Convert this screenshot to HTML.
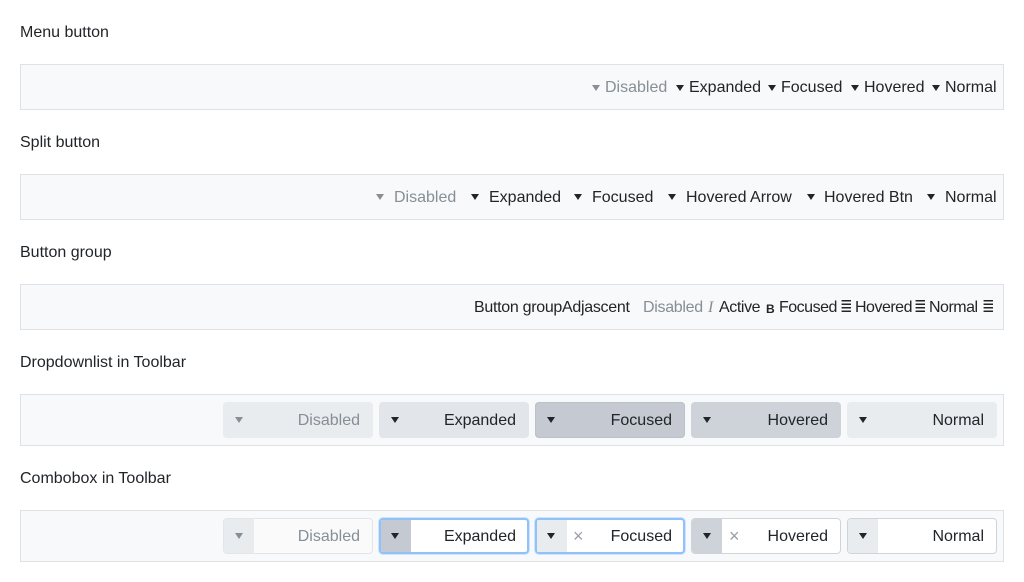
<!DOCTYPE html>
<html><head><style>
body{margin:0;width:1024px;height:582px;background:#fff;font-family:"Liberation Sans",sans-serif;font-size:16px;color:#212529;position:relative;overflow:hidden}
.a{position:absolute;white-space:nowrap;line-height:20px}
.lbl{left:20px}
.tb{position:absolute;left:20px;width:982px;background:#f8f9fa;border:1px solid #dee2e6}
.g{color:#868e96}
.t{position:absolute;width:0;height:0;border-left:4px solid transparent;border-right:4px solid transparent;border-top:6px solid #212529}
.tg{border-top-color:#868e96}
.dd{position:absolute;top:402px;width:150px;height:36px;border-radius:4px;background:#e9ecef;box-sizing:border-box}
.dd .t{left:12px;top:15px}
.dd span{position:absolute;right:13px;top:9px;line-height:20px}
.cb{position:absolute;top:518px;width:150px;height:36px;border-radius:4px;background:#fff;border:1px solid #ced4da;box-sizing:border-box;overflow:hidden}
.cb .ar{position:absolute;left:0;top:0;bottom:0;width:30px;background:#e9ecef}
.cb .t{left:11px;top:14px}
.cb span{position:absolute;right:12px;top:8px;line-height:20px}
.cb .x{position:absolute;left:37px;top:7px;color:#9aa0a6;font-size:18px}
.foc{border:2px solid #90c2f9;box-shadow:0 0 0 1px #cfe4fc}
.foc .t{left:10px;top:13px}.foc span{right:11px;top:7px}.foc .x{left:36px;top:6px}
</style></head><body>
<div class="a lbl" style="top:23px">Menu button</div>
<div class="tb" style="top:64px;height:44px"></div>
<div class="t tg" style="left:592px;top:85px"></div><div class="a g" style="left:605px;top:78px">Disabled</div>
<div class="t" style="left:676px;top:85px"></div><div class="a" style="left:689px;top:78px">Expanded</div>
<div class="t" style="left:768px;top:85px"></div><div class="a" style="left:781px;top:78px">Focused</div>
<div class="t" style="left:851px;top:85px"></div><div class="a" style="left:864px;top:78px">Hovered</div>
<div class="t" style="left:932px;top:85px"></div><div class="a" style="left:945px;top:78px">Normal</div>

<div class="a lbl" style="top:133px">Split button</div>
<div class="tb" style="top:174px;height:44px"></div>
<div class="t tg" style="left:376px;top:194px"></div><div class="a g" style="left:394px;top:188px">Disabled</div>
<div class="t" style="left:471px;top:194px"></div><div class="a" style="left:489px;top:188px">Expanded</div>
<div class="t" style="left:574px;top:194px"></div><div class="a" style="left:592px;top:188px">Focused</div>
<div class="t" style="left:668px;top:194px"></div><div class="a" style="left:686px;top:188px">Hovered Arrow</div>
<div class="t" style="left:807px;top:194px"></div><div class="a" style="left:824px;top:188px">Hovered Btn</div>
<div class="t" style="left:927px;top:194px"></div><div class="a" style="left:945px;top:188px">Normal</div>

<div class="a lbl" style="top:243px">Button group</div>
<div class="tb" style="top:284px;height:44px"></div>
<div class="a" style="left:474px;top:298px;letter-spacing:-0.3px">Button groupAdjascent</div>
<div class="a g" style="left:643px;top:298px;letter-spacing:-0.3px">Disabled</div>
<div class="a g" style="left:708px;top:298px;font-family:'Liberation Serif',serif;font-style:italic">I</div>
<div class="a" style="left:719px;top:298px;letter-spacing:-0.4px">Active</div>
<div class="a" style="left:766px;top:299px;font-weight:bold;font-size:12px">B</div>
<div class="a" style="left:779px;top:298px;letter-spacing:-0.5px">Focused</div>
<div class="a" style="left:840px;top:297px;font-size:15px;transform:scaleY(1.3)">≣</div>
<div class="a" style="left:855px;top:298px;letter-spacing:-0.5px">Hovered</div>
<div class="a" style="left:914px;top:297px;font-size:15px;transform:scaleY(1.3)">≣</div>
<div class="a" style="left:929px;top:298px;letter-spacing:-0.5px">Normal</div>
<div class="a" style="left:982px;top:297px;font-size:15px;transform:scaleY(1.3)">≣</div>

<div class="a lbl" style="top:353px">Dropdownlist in Toolbar</div>
<div class="tb" style="top:394px;height:50px"></div>
<div class="dd" style="left:223px"><div class="t tg"></div><span class="g">Disabled</span></div>
<div class="dd" style="left:379px;background:#e2e5e9"><div class="t"></div><span>Expanded</span></div>
<div class="dd" style="left:535px;background:#c5cad2;box-shadow:inset 0 0 0 1px #bcc2ca"><div class="t"></div><span>Focused</span></div>
<div class="dd" style="left:691px;background:#ced3da"><div class="t"></div><span>Hovered</span></div>
<div class="dd" style="left:847px"><div class="t"></div><span>Normal</span></div>

<div class="a lbl" style="top:469px">Combobox in Toolbar</div>
<div class="tb" style="top:510px;height:50px"></div>
<div class="cb" style="left:223px;background:#fafafa;border-color:#e2e5e9"><div class="ar"></div><div class="t tg"></div><span class="g">Disabled</span></div>
<div class="cb foc" style="left:379px"><div class="ar" style="background:#c5cad2"></div><div class="t"></div><span>Expanded</span></div>
<div class="cb foc" style="left:535px"><div class="ar"></div><div class="t"></div><div class="x">×</div><span>Focused</span></div>
<div class="cb" style="left:691px"><div class="ar" style="background:#ced3da"></div><div class="t"></div><div class="x">×</div><span>Hovered</span></div>
<div class="cb" style="left:847px"><div class="ar"></div><div class="t"></div><span>Normal</span></div>
</body></html>
